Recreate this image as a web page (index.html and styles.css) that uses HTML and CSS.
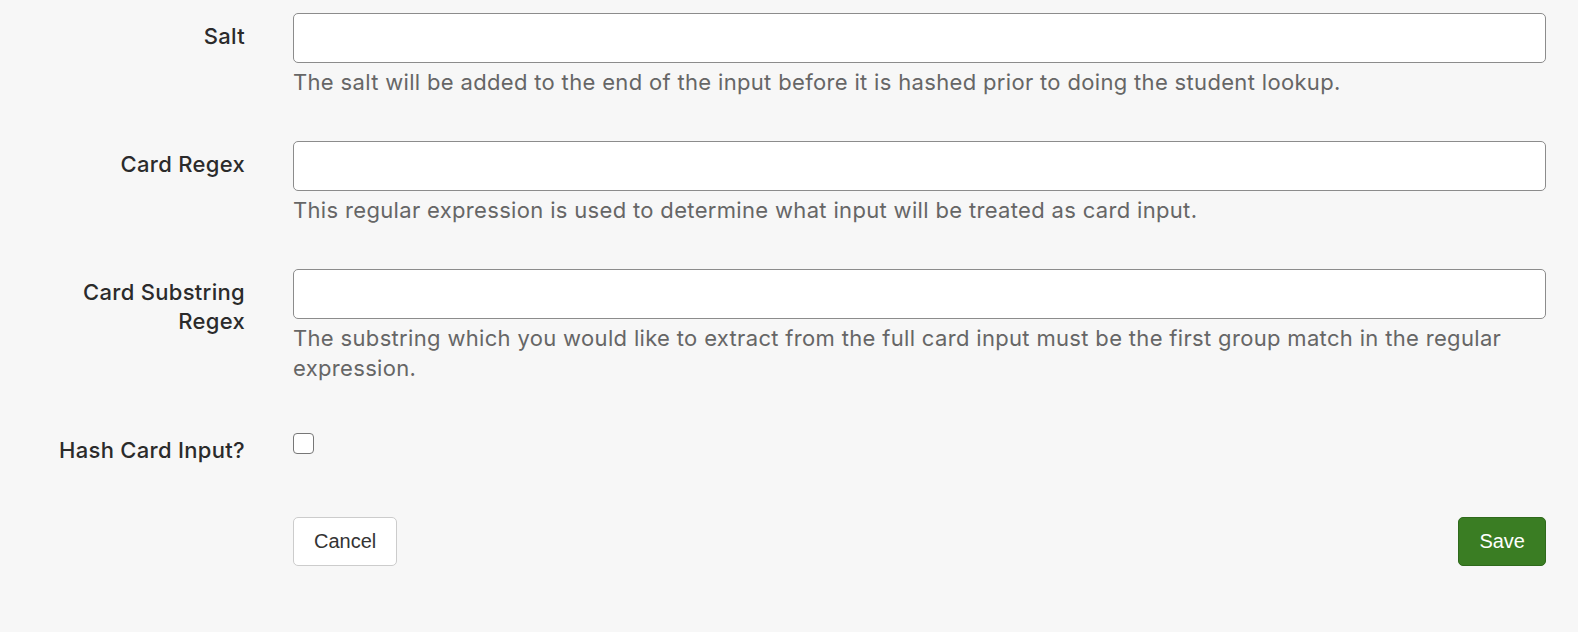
FILE: index.html
```html
<!DOCTYPE html>
<html lang="en">
<head>
  <meta charset="UTF-8">
  <title>Card Settings</title>
  <link rel="stylesheet" href="styles.css">
</head>
<body>

  <form class="settings-form">
    <!-- Salt -->
    <div class="form-row">
      <label class="form-label" for="salt">Salt</label>
      <div class="form-field">
        <input type="text" id="salt" class="text-input">
        <p class="help-text">The salt will be added to the end of the input before it is hashed prior to doing the student lookup.</p>
      </div>
    </div>

    <!-- Card Regex -->
    <div class="form-row">
      <label class="form-label" for="cardRegex">Card Regex</label>
      <div class="form-field">
        <input type="text" id="cardRegex" class="text-input">
        <p class="help-text">This regular expression is used to determine what input will be treated as card input.</p>
      </div>
    </div>

    <!-- Card Substring Regex -->
    <div class="form-row">
      <label class="form-label" for="cardSubstring">Card Substring<br>Regex</label>
      <div class="form-field">
        <input type="text" id="cardSubstring" class="text-input">
        <p class="help-text">The substring which you would like to extract from the full card input must be the first group match in the regular expression.</p>
      </div>
    </div>

    <!-- Hash Card Input -->
    <div class="form-row check-row">
      <label class="form-label" for="hashCard">Hash Card Input?</label>
      <div class="form-field">
        <input type="checkbox" id="hashCard" class="check-input">
      </div>
    </div>

    <div class="form-actions">
      <button type="button" class="btn btn-cancel">Cancel</button>
      <button type="submit" class="btn btn-save">Save</button>
    </div>
  </form>

</body>
</html>
```

FILE: styles.css
```css
body {
  font-family: 'Inter', 'Liberation Sans', sans-serif;
  background-color: #f7f7f7;
  color: #333;
  margin: 0;
  padding: 13px 32px 0 0;
}

.form-row {
  display: grid;
  grid-template-columns: 245px 1fr;
  column-gap: 48px;
  margin-bottom: 44px;
}

.form-label {
  text-align: right;
  font-size: 22px;
  font-weight: 500;
  letter-spacing: 0.3px;
  line-height: 29px;
  padding-top: 9px;
  color: #2b2b2b;
}

.text-input {
  display: block;
  box-sizing: border-box;
  width: 100%;
  height: 50px;
  padding: 8px 14px;
  font-size: 21px;
  font-family: inherit;
  background: #fff;
  border: 1px solid #8c8c8c;
  border-radius: 5px;
}

.help-text {
  margin: 4px 0 0;
  font-size: 22px;
  letter-spacing: 0.33px;
  line-height: 30px;
  color: #666;
}

.check-row {
  margin-bottom: 41px;
  height: 49px;
}

.check-input {
  appearance: none;
  display: block;
  width: 21px;
  height: 21px;
  margin: 6px 0 0;
  background: #fff;
  border: 1px solid #777;
  border-radius: 4px;
}

.form-actions {
  display: flex;
  justify-content: space-between;
  margin-left: 293px;
}

.btn {
  height: 49px;
  padding: 0 20px;
  font-size: 20px;
  font-family: 'Liberation Sans', sans-serif;
  border-radius: 5px;
  cursor: pointer;
}

.btn-cancel {
  background: #fff;
  color: #333;
  border: 1px solid #ccc;
}

.btn-save {
  background: #3a7d23;
  color: #fff;
  border: 1px solid #2f6a1c;
}
```
